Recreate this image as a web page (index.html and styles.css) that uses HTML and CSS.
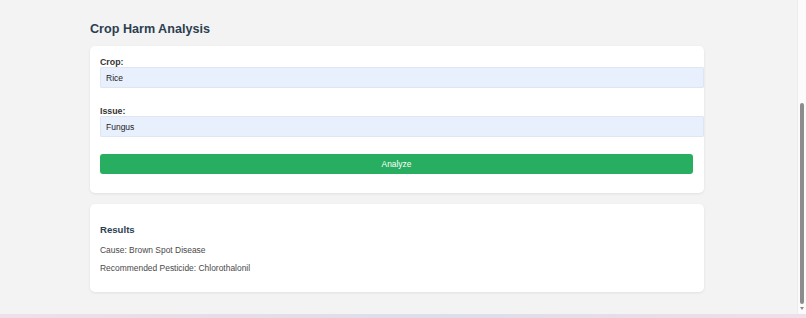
FILE: index.html
```html
<!DOCTYPE html>
<html lang="en">
<head>
<meta charset="utf-8">
<title>Crop Harm Analysis</title>
<link rel="stylesheet" href="styles.css">
</head>
<body>
<div class="window">
  <div class="viewport">
    <main class="page">
      <h1 class="title">Crop Harm Analysis</h1>
      <section class="card form-card">
        <label class="field-label" for="crop">Crop:</label>
        <input class="field-input" id="crop" type="text" value="Rice">
        <label class="field-label" for="issue">Issue:</label>
        <input class="field-input" id="issue" type="text" value="Fungus">
        <button class="analyze-btn" type="button">Analyze</button>
      </section>
      <section class="card results">
        <h3 class="results-title">Results</h3>
        <p class="results-line">Cause: Brown Spot Disease</p>
        <p class="results-line">Recommended Pesticide: Chlorothalonil</p>
      </section>
    </main>
    <div class="scrollbar">
      <div class="thumb"></div>
      <div class="arrow"></div>
    </div>
  </div>
  <div class="strip"></div>
</div>
</body>
</html>
```
FILE: styles.css
```css
html, body {
  margin: 0;
  padding: 0;
  background: #f3f3f3;
  font-family: "Liberation Sans", Arial, sans-serif;
  overflow: hidden;
}

.window {
  height: 318px;
  display: flex;
  flex-direction: column;
}

.viewport {
  flex: 1;
  display: flex;
  overflow: hidden;
}

.page {
  flex: 1;
  padding: 22px 0 0 90px;
}

.title {
  margin: 0 0 10px;
  font-size: 12.6px;
  line-height: 14px;
  font-weight: bold;
  color: #2c3e50;
}

.card {
  width: 594px;
  background: #fff;
  border-radius: 5px;
  box-shadow: 0 1px 3px rgba(0, 0, 0, 0.08);
}

.form-card {
  padding: 11px 10px 19px;
}

.field-label {
  display: block;
  font-size: 8.8px;
  line-height: 10px;
  font-weight: bold;
  color: #333;
}

.field-input {
  display: block;
  width: 100%;
  height: 21px;
  padding: 0 4px 0 6px;
  margin: 0 0 18px;
  border: none;
  border-radius: 2px;
  background: #e8f0fe;
  box-shadow: inset 0 0 0 1px #dfe6f2;
  font-family: "Liberation Sans", Arial, sans-serif;
  font-size: 8.5px;
  color: #222;
  outline: none;
  box-sizing: content-box;
}

.analyze-btn {
  display: block;
  width: 593px;
  height: 20px;
  margin-top: -1px;
  border: none;
  border-radius: 3px;
  background: #27ae60;
  color: #fff;
  font-family: "Liberation Sans", Arial, sans-serif;
  font-size: 8.4px;
  padding: 0;
}

.results {
  margin-top: 11px;
  padding: 10px 10px 10px;
}

.results-title {
  margin: 11px 0 10.6px;
  font-size: 9.6px;
  line-height: 10.7px;
  font-weight: bold;
  color: #2c3e50;
}

.results-line {
  margin: 0 0 8.6px;
  font-size: 8.45px;
  line-height: 9.4px;
  color: #4a4a4a;
}

.scrollbar {
  width: 9px;
  background: #fbfbfb;
  border-left: 1px solid #ececec;
  display: flex;
  flex-direction: column;
  align-items: center;
  padding-top: 103px;
  box-sizing: border-box;
}

.thumb {
  width: 4px;
  height: 201px;
  background: #8c8c8c;
  border-radius: 2px;
}

.arrow {
  margin-top: 3px;
  width: 0;
  height: 0;
  border-left: 2.5px solid transparent;
  border-right: 2.5px solid transparent;
  border-top: 3px solid #8c8c8c;
}

.strip {
  height: 4px;
  background: linear-gradient(90deg, #efdfe8 0%, #e6dde8 30%, #dcdfe9 55%, #e9dde8 80%, #f0dfe9 100%);
}
```
